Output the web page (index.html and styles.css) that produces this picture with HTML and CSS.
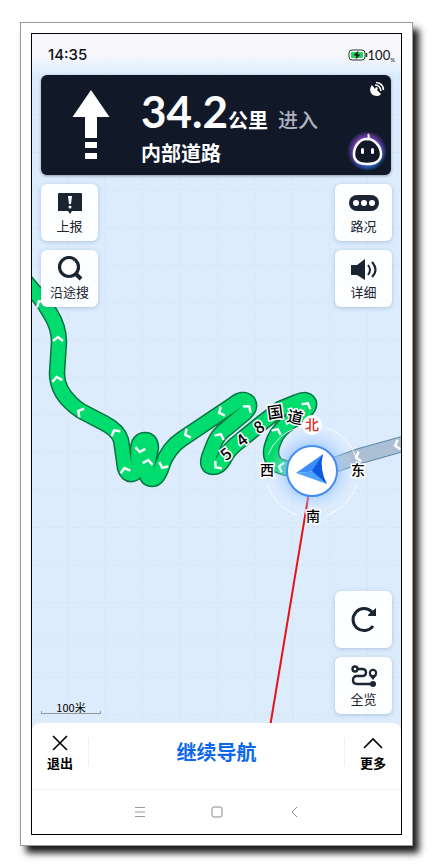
FILE: index.html
```html
<!DOCTYPE html>
<html lang="zh-CN">
<head>
  <meta charset="UTF-8">
  <meta name="viewport" content="width=device-width, initial-scale=1.0">
  <title>导航</title>
  <link rel="stylesheet" href="styles.css">
</head>
<body>
  <div class="frame">
    <div class="screen">
      <!-- Map -->
      <svg class="map" viewBox="32 34 369 800" preserveAspectRatio="xMidYMid slice" role="img" aria-label="地图">
        <defs>
          <pattern id="grid" x="67" y="302" width="75" height="75" patternUnits="userSpaceOnUse">
            <path d="M.5 0V75M38 0V75M0 .5H75M0 38H75" fill="none" stroke="#d5e5f5" stroke-width="1" stroke-dasharray="3 2"/>
          </pattern>
          <radialGradient id="glow">
            <stop offset=".55" stop-color="#8fc0ff" stop-opacity=".7"/>
            <stop offset="1" stop-color="#c4e0ff" stop-opacity="0"/>
          </radialGradient>
          <path id="route" d="M22 277L32 289Q43 300 50 313Q59 327 59 342L57 373Q57 390 71 403Q75 407 81 411L104 423Q118 430 121 440L125 468Q127 475 132 474Q138 473 138 462L138 448Q139 440 145 440Q151 440 151 448L147 468Q145 479 152 479Q158 479 162 466Q168 448 182 439L234 404Q243 397 248 402Q251 407 245 413L227 428Q218 434 214 444L209 457Q206 467 213 467Q220 467 225 457Q229 449 241 440L263 422L280 409L297 402Q306 398 309 403Q310 407 304 412L286 425Q276 432 272 446Q269 456 275 463Q281 470 312 470"/>
          <path id="chev" d="M-5 2L0 -2L5 2" fill="none" stroke="#fff" stroke-width="2.400"/>
        </defs>
        <rect x="32" y="34" width="369" height="800" fill="#dcecfd"/>
        <rect x="32" y="34" width="369" height="800" fill="url(#grid)"/>

        <path d="M320 470L360 456L410 442" fill="none" stroke="#5c86a8" stroke-width="16"/>
        <path d="M320 470L360 456L410 442" fill="none" stroke="#abc0d5" stroke-width="14"/>
        <g fill="none" stroke-linejoin="round">
          <use href="#route" stroke="#087442" stroke-width="16.500"/>
          <use href="#route" stroke="#00dc6e" stroke-width="13.500"/>
        </g>
        <use href="#chev" transform="translate(40 303) rotate(-35)"/>
        <use href="#chev" transform="translate(58 339)"/>
        <use href="#chev" transform="translate(57 379) rotate(-10)"/>
        <use href="#chev" transform="translate(80 412) rotate(-62)"/>
        <use href="#chev" transform="translate(115 432) rotate(-30)"/>
        <use href="#chev" transform="translate(125 470) rotate(-15)"/>
        <use href="#chev" transform="translate(140 450) rotate(190)"/>
        <use href="#chev" transform="translate(148 462) rotate(10)"/>
        <use href="#chev" transform="translate(163 466) rotate(205)"/>
        <use href="#chev" transform="translate(187 434) rotate(-115)"/>
        <use href="#chev" transform="translate(221 412) rotate(-115)"/>
        <use href="#chev" transform="translate(248 408) rotate(40)"/>
        <use href="#chev" transform="translate(220 436) rotate(25)"/>
        <use href="#chev" transform="translate(217 466) rotate(-130)"/>
        <use href="#chev" transform="translate(307 405) rotate(30)"/>
        <use href="#chev" transform="translate(277 431) rotate(25)"/>
        <use href="#chev" transform="translate(281 467) rotate(-75)"/>
        <use href="#chev" transform="translate(358 457) rotate(-105)"/>
        <use href="#chev" transform="translate(397 445) rotate(-105)"/>

        <path d="M312 474L270 727" stroke="#e8121c" stroke-width="2"/>

        <g class="road-name">
          <text transform="translate(226 454) rotate(-38)" y="6">5</text>
          <text transform="translate(242 440) rotate(-38)" y="6">4</text>
          <text transform="translate(259 427) rotate(-30)" y="6">8</text>
          <text transform="translate(275 412) rotate(-8)" y="6">国</text>
          <text transform="translate(295 417) rotate(12)" y="6">道</text>
        </g>

        <!-- Compass -->
        <circle cx="312" cy="470" r="42" fill="url(#glow)"/>
        <g fill="none" stroke="#fff" stroke-opacity=".85" stroke-width="1">
          <path d="M327 428A45 45 0 0 1 356 458M356 486A45 45 0 0 1 327 515M297 515A45 45 0 0 1 268 486M268 455A45 45 0 0 1 297 428"/>
        </g>
        <circle cx="312" cy="471" r="25" fill="#fff" stroke="#468df0" stroke-width="2"/>
        <path d="M323 454L296 473L318 471Z" fill="#3c8cfa"/>
        <path d="M296 473L327 484L318 471Z" fill="#4ba2ff"/>
        <path d="M323 454L312 471L327 484Q319 469 323 454Z" fill="#0f58e0"/>
        <circle cx="312" cy="425" r="10" fill="#fff" fill-opacity=".9"/>
        <g class="compass-text">
          <text class="north" x="312" y="430">北</text>
          <text x="358" y="475">东</text>
          <text x="313" y="521">南</text>
          <text x="267" y="475">西</text>
        </g>
      </svg>

      <!-- Status bar -->
      <header class="status">
        <time>14:35</time>
        <div class="battery">
          <svg width="20" height="12" viewBox="0 0 20 12">
            <rect x="1" y="1" width="16" height="10" rx="3" fill="#fff" stroke="#26352c"/>
            <rect x="3" y="3" width="12" height="6" rx="1" fill="#20d663"/>
            <path d="M18.500 4v4" stroke="#26352c" stroke-width="1.500"/>
            <path d="M10.500 1.500L5.500 6.500H8.500L7.500 10.500L12.500 5.500H9.500Z" fill="#101814"/>
          </svg>
          <span>100</span><small>%</small>
        </div>
      </header>

      <!-- Next turn -->
      <section class="guide">
        <svg class="turn-arrow" width="38" height="70" viewBox="0 0 38 70">
          <path d="M19 0L37.500 27H25V48H13V27H.5ZM13 52H25V58H13ZM13 63H25V69H13Z" fill="#fff"/>
        </svg>
        <div class="guide-text">
          <p class="distance"><strong>34.2</strong><b>公里</b><span>进入</span></p>
          <p class="road">内部道路</p>
        </div>
        <div class="guide-side">
          <svg class="satellite" width="16" height="16" viewBox="0 0 16 16">
            <path d="M3 4C-1 9 2 15 8 15Q11 15 12 13L8 9L9 7L7 6L6 8Z" fill="#fff"/>
            <path d="M6 4Q11 4 12 10M7 1.500Q14 2 14.500 9" fill="none" stroke="#fff" stroke-width="1.500"/>
          </svg>
          <svg width="40" height="40" viewBox="0 0 40 40">
            <defs>
              <radialGradient id="halo"><stop offset=".7" stop-color="#fff"/><stop offset="1" stop-color="#fff" stop-opacity="0"/></radialGradient>
              <linearGradient id="tint" x1="0" x2=".5" y1="0" y2="1"><stop stop-color="#7445b4"/><stop offset=".5" stop-color="#673bab"/><stop offset="1" stop-color="#2f78ed"/></linearGradient>
              <mask id="fade"><circle cx="20" cy="20" r="20" fill="url(#halo)"/></mask>
            </defs>
            <circle cx="20" cy="20" r="20" fill="url(#tint)" mask="url(#fade)"/>
            <path d="M20 8C12 8 7 16 7 23C7 30 12 33 20 33S34 30 34 23C34 16 28 8 20 8Z" fill="#111929" stroke="#fff" stroke-width="2.500"/>
            <path d="M20 9Q23 6 21 3" fill="none" stroke="#fff" stroke-width="2"/>
            <rect x="14" y="17" width="3" height="6" rx="1.500" fill="#fff"/>
            <rect x="24" y="17" width="3" height="6" rx="1.500" fill="#fff"/>
          </svg>
        </div>
      </section>

      <!-- Map tools -->
      <main class="tools">
        <div class="tool-row">
          <div class="tool-col">
            <button class="tool" type="button">
              <svg width="28" height="26" viewBox="0 0 28 26"><path d="M3 3H25Q26 3 26 4V21H16L14 24L12 21H2V4Q2 3 3 3Z" fill="#1b2431"/><path d="M12 6H16L15 14H13Z" fill="#fff"/><circle cx="14" cy="17" r="1.500" fill="#fff"/></svg>
              <span>上报</span>
            </button>
            <button class="tool" type="button">
              <svg width="28" height="26" viewBox="0 0 28 26"><circle cx="13" cy="11" r="9.500" fill="none" stroke="#1b2431" stroke-width="3.200"/><path d="M19 17L25 23" stroke="#1b2431" stroke-width="4"/></svg>
              <span>沿途搜</span>
            </button>
          </div>
          <div class="tool-col">
            <button class="tool" type="button">
              <svg width="32" height="26" viewBox="0 0 32 26"><rect x="1" y="5" width="30" height="16" rx="8" fill="#1b2431"/><g fill="#fff"><circle cx="8" cy="13" r="3"/><circle cx="16" cy="13" r="3"/><circle cx="24" cy="13" r="3"/></g></svg>
              <span>路况</span>
            </button>
            <button class="tool" type="button">
              <svg width="28" height="26" viewBox="0 0 28 26"><path d="M1 9H7L15 3V24L7 19H1Z" fill="#1b2431"/><path d="M18 9Q22 14 18 19M22 6Q29 14 22 21" fill="none" stroke="#1b2431" stroke-width="2"/></svg>
              <span>详细</span>
            </button>
          </div>
        </div>
        <div class="tool-row bottom">
          <div class="scale">100米</div>
          <div class="tool-col">
            <button class="tool" type="button" aria-label="刷新">
              <svg width="28" height="28" viewBox="0 0 28 28"><path d="M22 6A11 11 0 1 0 23 20" fill="none" stroke="#1b2431" stroke-width="3"/><path d="M26 2V10H18Q18 8 20 7Z" fill="#1b2431"/></svg>
            </button>
            <button class="tool" type="button">
              <svg width="28" height="26" viewBox="0 0 28 26"><g fill="none" stroke="#1b2431" stroke-width="2.400"><circle cx="5" cy="6" r="2.500"/><path d="M8 6H12Q16 6 16 9.500T12 13H7Q3 13 3 17T7 21H23"/><circle cx="23" cy="10" r="3"/></g><path d="M19 12H27L23 17Z" fill="#1b2431"/><circle cx="23" cy="10" r="2" fill="#fff"/><circle cx="23" cy="21" r="3" fill="#1b2431"/></svg>
              <span>全览</span>
            </button>
          </div>
        </div>
      </main>

      <!-- Bottom panel -->
      <footer class="panel">
        <div class="actions">
          <button class="side" type="button">
            <svg width="20" height="18" viewBox="0 0 20 18"><path d="M3 2L17 16M17 2L3 16" stroke="#000" stroke-width="1.600"/></svg>
            退出
          </button>
          <button class="resume" type="button">继续导航</button>
          <button class="side" type="button">
            <svg width="20" height="18" viewBox="0 0 20 18"><path d="M1 14L10 5L19 14" fill="none" stroke="#000" stroke-width="1.600"/></svg>
            更多
          </button>
        </div>
        <nav class="sysnav">
          <button type="button" aria-label="菜单"><svg width="12" height="12" viewBox="0 0 12 12"><path d="M1 1.500H11M1 6H11M1 10.500H11" stroke="#999"/></svg></button>
          <button type="button" aria-label="主页"><svg width="12" height="12" viewBox="0 0 12 12"><rect x="1" y="1" width="10" height="10" rx="2" fill="none" stroke="#888"/></svg></button>
          <button type="button" aria-label="返回"><svg width="12" height="12" viewBox="0 0 12 12"><path d="M9 1L4 6L9 11" fill="none" stroke="#888"/></svg></button>
        </nav>
      </footer>
    </div>
  </div>
</body>
</html>
```
FILE: styles.css
```css
* {
  margin: 0;
  padding: 0;
  box-sizing: border-box;
}
body {
  display: flex;
  min-height: 100vh;
  padding: 22px 20px;
  background-color: #fff;
  font-family: Lato, "Noto Sans CJK SC", sans-serif;
  color: #1b2431;
}
button {
  border: none;
  background: none;
  font-family: inherit;
  color: inherit;
  cursor: pointer;
}
svg {
  display: block;
}
.frame {
  flex: 1;
  display: flex;
  padding: 10px;
  border: 1px solid #999;
  background-color: #fff;
  box-shadow: 6px 7px 7px rgba(0, 0, 0, 0.9);
}
.screen {
  flex: 1;
  position: relative;
  display: flex;
  flex-direction: column;
  border: 1px solid #000;
  overflow: hidden;
}
/* the map lies under everything else */
.map {
  position: absolute;
  top: 0;
  left: 0;
  width: 100%;
  height: 100%;
}
.road-name,
.compass-text {
  font-size: 16px;
  font-weight: 500;
  font-family: "Noto Sans CJK SC", sans-serif;
  text-anchor: middle;
  fill: #000;
  stroke: #fff;
  stroke-width: 3px;
  paint-order: stroke;
}
.compass-text {
  font-size: 14px;
}
.north {
  fill: #e0281e;
}
.status,
.guide,
.tools,
.panel {
  position: relative;
}
.status {
  display: flex;
  justify-content: space-between;
  align-items: center;
  height: 41px;
  padding: 0 6px 0 16px;
  background: linear-gradient(#f8f8fc 50%, rgba(232, 241, 253, 0));
  color: #111;
}
.status time {
  font-family: Inter, sans-serif;
  font-size: 15px;
  font-weight: 500;
}
.battery {
  display: flex;
  align-items: center;
  font-size: 13px;
}
.battery small {
  align-self: flex-end;
  font-size: 6px;
}
.guide {
  display: flex;
  height: 100px;
  margin: 0 10px 0 9px;
  border-radius: 6px;
  background-color: #111929;
  color: #fff;
  box-shadow: 0 1px 3px rgba(17, 25, 41, 0.4);
}
.turn-arrow {
  margin: 15px 31px 0;
}
.guide-text {
  flex: 1;
  padding-top: 11px;
}
.distance {
  display: flex;
  align-items: baseline;
  height: 52px;
  font-size: 20px;
  line-height: 50px;
}
.distance strong {
  font-size: 44px;
}
.distance b {
  font-weight: 700;
}
.distance span {
  margin-left: 10px;
  font-weight: 500;
  color: #adb1bd;
}
.road {
  font-size: 20px;
  font-weight: 700;
  line-height: 30px;
}
.guide-side {
  display: flex;
  flex-direction: column;
  justify-content: space-between;
  align-items: flex-end;
  padding: 6px 4px 4px 0;
}
.satellite {
  margin-right: 2px;
}
.tools {
  flex: 1;
  display: flex;
  flex-direction: column;
  justify-content: space-between;
  padding: 9px;
}
.tool-row {
  display: flex;
  justify-content: space-between;
}
.bottom {
  align-items: flex-end;
}
.tool-col {
  display: flex;
  flex-direction: column;
  gap: 9px;
}
.tool {
  display: flex;
  flex-direction: column;
  justify-content: center;
  align-items: center;
  width: 57px;
  height: 57px;
  border-radius: 6px;
  background-color: #fdfeff;
  box-shadow: 0 1px 4px rgba(60, 100, 150, 0.3);
  font-size: 13px;
  line-height: 20px;
}
.scale {
  width: 60px;
  height: 14px;
  border: 1px solid #999;
  border-top: none;
  border-image: linear-gradient(transparent 80%, #999 80%) 1;
  font-family: "Noto Sans CJK SC", sans-serif;
  font-size: 11px;
  line-height: 14px;
  text-align: center;
  color: #000;
}
.panel {
  border-radius: 8px 8px 0 0;
  background-color: #fff;
}
.actions {
  display: flex;
  align-items: center;
  height: 66px;
}
.side {
  display: flex;
  flex-direction: column;
  align-items: center;
  width: 56px;
  padding-bottom: 4px;
  font-size: 13px;
  font-weight: 700;
  line-height: 22px;
  color: #000;
}
.resume {
  flex: 1;
  height: 28px;
  margin-bottom: 8px;
  border: 1px solid #f2f2f2;
  border-width: 0 1px;
  font-size: 20px;
  font-weight: 700;
  line-height: 28px;
  color: #0d68ed;
}
.sysnav {
  display: flex;
  justify-content: center;
  align-items: center;
  gap: 65px;
  height: 45px;
  border-top: 1px solid #f3f3f3;
}
```
